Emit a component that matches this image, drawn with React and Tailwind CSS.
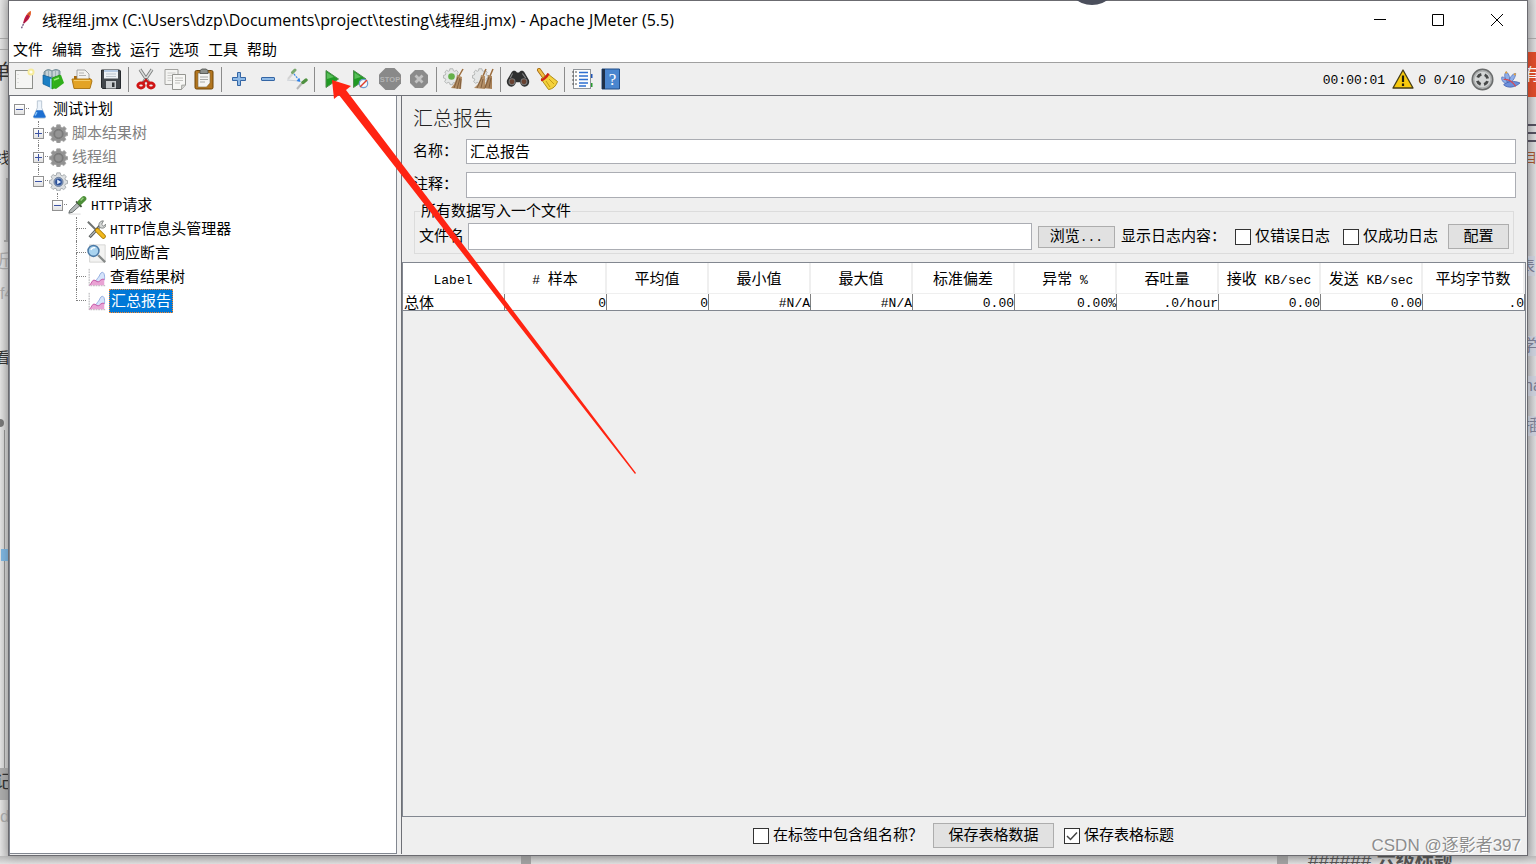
/**
 * App.jsx — JMeter main window (summary report) floating over a desktop.
 *
 * Structure:
 *  - Desktop    → slivers of the windows behind
 *  - TitleBar / MenuBar / Toolbar
 *  - TestPlanTree → left pane
 *  - SummaryReport → right pane
 */

/* ====================================================================
   Text helper — ascii runs use the narrower mono face
   ==================================================================== */
function Mixed({ children }) {
  return children.split(/([\x20-\x7e]+)/).map((part, i) =>
    /^[\x20-\x7e]+$/.test(part) ? (
      <span key={i} className="whitespace-pre font-['Liberation_Mono',monospace] text-[13px] leading-none">{part}</span>
    ) : (
      part
    )
  );
}

/* ====================================================================
   Icons
   ==================================================================== */
function Icon({ size = 'size-[22px]', children }) {
  return (
    <svg viewBox="0 0 22 22" className={`${size} shrink-0`} fill="none" aria-hidden="true">
      {children}
    </svg>
  );
}

function FeatherIcon() {
  return (
    <Icon size="size-[20px]">
      <path d="M5 20 9 11" stroke="#5a3a6a" strokeWidth="1.3" strokeDasharray="2 1" />
      <path d="M7 15C7 10 10 4 15 1c1 4-2 11-8 14z" fill="#c8193c" />
      <path d="M11 5c1-2 3-3.500 4-4 .5 2 0 4-1 6z" fill="#ef7a22" />
      <path d="M8 14 14 3" stroke="#7c1a55" strokeWidth=".7" />
    </Icon>
  );
}

function NewIcon() {
  return (
    <Icon>
      <rect x="2.500" y="2.500" width="17" height="18" fill="#f5f5f3" stroke="#8d8f8a" />
      <path d="M5 6v11" stroke="#c9c9c6" strokeDasharray="1 3" />
      <circle cx="18" cy="4" r="3.500" fill="#f6eb9a" />
      <circle cx="18" cy="4" r="1.600" fill="#fffef0" />
    </Icon>
  );
}

function TemplatesIcon() {
  return (
    <Icon>
      <path d="M2 4c3-3 5-3 8-1 3-2 5-2 8 0v6H2z" fill="#9fb1b8" stroke="#65818d" strokeWidth=".8" />
      <path d="M5 3v6M8 3v6M12 3v6M15 3v6" stroke="#edf3f5" />
      <path d="m1 7 9 3v10l-9-4z" fill="#1b7fc4" stroke="#0d5a94" strokeWidth=".7" />
      <path d="m8 11 3-1v10l-3 1z" fill="#9bd8f2" />
      <path d="m10 10 8-3v10l-8 4z" fill="#35bb1c" stroke="#178209" strokeWidth=".7" />
      <path d="m13 9 6-2 3 8-8 6-3-1z" fill="#2fae1a" />
      <path d="m12 12 5-2" stroke="#9bf07c" strokeWidth="1.500" />
    </Icon>
  );
}

function OpenIcon() {
  return (
    <Icon>
      <path d="M3 20V8h5l2 2h9v10z" fill="#a9690b" />
      <path d="M6 12V2h8l4 4v8z" fill="#f2f2f0" stroke="#929292" strokeWidth=".8" />
      <path d="M8 5h5M8 7.500h7" stroke="#b2b2b2" />
      <path d="M1 11h19l1 2-2 7.500H3z" fill="#e3a325" stroke="#a76f0c" strokeWidth=".9" />
      <path d="M3 12.500h16" stroke="#f6cd6b" />
    </Icon>
  );
}

function SaveIcon() {
  return (
    <Icon>
      <path d="M1.500 2h18l1 1v17.500h-18l-1-1z" fill="#43484d" stroke="#24282c" />
      <rect x="4" y="2" width="14" height="8.500" fill="#eef2f6" />
      <path d="M4 3h14" stroke="#7ea3cf" />
      <path d="M6 6h10M6 8.500h10" stroke="#bcc5cd" />
      <rect x="6" y="13" width="10" height="7.500" fill="#c9cdd0" />
      <rect x="12" y="14.500" width="2.500" height="4.500" fill="#33373a" />
    </Icon>
  );
}

function CutIcon() {
  return (
    <Icon>
      <path d="M5 1.500 14 15M17 1.500 8 15" stroke="#7b7e7d" strokeWidth="3.200" />
      <path d="M5 1.500 14 15M17 1.500 8 15" stroke="#dadcdb" strokeWidth="1.500" />
      <circle cx="11" cy="11" r="1" fill="#555" />
      <ellipse cx="6" cy="17.500" rx="3.200" ry="2.500" stroke="#cf1414" strokeWidth="2.800" />
      <ellipse cx="16" cy="17.500" rx="3.200" ry="2.500" stroke="#cf1414" strokeWidth="2.800" />
      <path d="m8 15 3-3 3 3" stroke="#cf1414" strokeWidth="2" />
    </Icon>
  );
}

function CopyIcon() {
  return (
    <Icon>
      <path d="M1 1.500h13v15H1z" fill="#f4f4f2" stroke="#a3a3a0" />
      <path d="M3.500 5h8M3.500 7.500h5M3.500 10h4M3.500 12.500h4" stroke="#cacac8" />
      <path d="M8.500 6.500h13V17l-4 4.500h-9z" fill="#f7f7f5" stroke="#949591" />
      <path d="M11 10h8M11 12.500h8M11 15h5" stroke="#c2c2bf" />
      <path d="m17.500 21.500.2-4.300 3.800-.2" fill="#d5d5d2" stroke="#949591" strokeWidth=".8" />
    </Icon>
  );
}

function PasteIcon() {
  return (
    <Icon>
      <rect x="2" y="2.500" width="18" height="18.500" rx="1.500" fill="#b2751e" stroke="#704607" />
      <path d="M5 5h12v10l-3.500 4H5z" fill="#f5f5f3" stroke="#7d6b4a" strokeWidth=".6" />
      <path d="M7 9h8M7 11.500h8M7 14h5" stroke="#a9aaa7" />
      <path d="M7 5.500v-3l2-1.500h4l2 1.500v3z" fill="#8d908c" stroke="#4b4e4a" strokeWidth=".8" />
    </Icon>
  );
}

function PlusIcon() {
  return (
    <Icon>
      <path d="M9.500 4.500h3v5h5v3h-5v5h-3v-5h-5v-3h5z" fill="#8db9e6" stroke="#3465a4" strokeLinejoin="round" />
    </Icon>
  );
}

function MinusIcon() {
  return (
    <Icon>
      <rect x="4.500" y="9.500" width="13" height="3" rx=".5" fill="#8db9e6" stroke="#3465a4" />
    </Icon>
  );
}

function ToggleIcon() {
  return (
    <Icon>
      <path d="m2 11 6-7" stroke="#d3d3d3" strokeWidth="2" />
      <path d="m6.500 4.500 2.500-2.500" stroke="#79a86d" strokeWidth="3" strokeLinecap="round" />
      <path d="m1 12 12 1" stroke="#c9cfd6" />
      <path d="m8 6 5 6" stroke="#3c8be8" strokeWidth="1.200" strokeDasharray="2 1" />
      <path d="m14.500 14-1-4-3 3z" fill="#2d7fe6" />
      <path d="m11 21 6-7" stroke="#b9b9b9" strokeWidth="2" />
      <path d="m17 14.500 3-2.500" stroke="#4f9140" strokeWidth="3.400" strokeLinecap="round" />
    </Icon>
  );
}

function PlayIcon() {
  return (
    <Icon>
      <path d="M5 2.500 17.500 11 5 19.500z" fill="#1f9a23" stroke="#4f8d4e" />
      <path d="M6 4.500 13 9 6 11z" fill="#58bd58" />
    </Icon>
  );
}

function PlayNoPauseIcon() {
  return (
    <Icon>
      <path d="M3.500 2.500 16 11 3.500 19.500z" fill="#1f9a23" stroke="#4f8d4e" />
      <path d="M4.500 4.500 11 9 4.500 11z" fill="#58bd58" />
      <circle cx="13.500" cy="15.500" r="4.200" fill="#f5f8fc" stroke="#6f9dd0" strokeWidth="1.200" />
      <path d="m10 19 7-7" stroke="#e03c2b" strokeWidth="1.500" />
    </Icon>
  );
}

function StopIcon() {
  return (
    <Icon>
      <path d="M6.500 0h9L22 6.500v9L15.500 22h-9L0 15.500v-9z" fill="#898989" />
      <text x="11" y="14" textAnchor="middle" fontSize="7.500" fontWeight="700" fill="#b3b3b3" className="font-['Liberation_Sans',sans-serif]">
        STOP
      </text>
    </Icon>
  );
}

function ShutdownIcon() {
  return (
    <Icon>
      <path d="M7 2h8l5 5v8l-5 5H7l-5-5V7z" fill="#8b8b8b" />
      <path d="m7.500 7.500 7 7m0-7-7 7" stroke="#c2c2c2" strokeWidth="2.800" />
    </Icon>
  );
}

const gearPath =
  'M9 1h4l.6 2.600 1.800.8L17.700 3 20 5.600l-1.500 2.200.7 1.700 2.300.5v3.400l-2.500.6-.7 1.700 1.300 2.200-2.500 2.400-2.200-1.300-1.700.6L12.600 22H9.300l-.6-2.400-1.800-.7-2.300 1.300-2.400-2.400 1.400-2.300-.7-1.700L.6 13.200V9.800l2.400-.6.700-1.700L2.400 5.300 4.800 3l2.100 1.300 1.700-.7z';

function GearIcon({ disabled }) {
  return (
    <Icon size="size-[19px]">
      <path d={gearPath} fill={disabled ? '#929292' : '#dcdfe1'} stroke={disabled ? '#a4a4a4' : '#9da2a6'} />
      <circle cx="11" cy="11.500" r="5.300" fill={disabled ? '#808080' : '#7d94bb'} stroke={disabled ? '#747474' : '#6c7d99'} />
      <circle cx="11" cy="11.500" r="3.800" fill={disabled ? '#949494' : '#2a5099'} />
      {!disabled && <path d="m9.500 8.800 4.500 2.700-4.500 2.700z" fill="#e5efff" />}
    </Icon>
  );
}

function ClearIcon() {
  return (
    <Icon>
      <g transform="scale(.76)">
        <path d={gearPath} fill="#e5e7e7" stroke="#a5a8a7" />
      </g>
      <circle cx="8.500" cy="8.500" r="3.300" fill="#65b14b" />
      <path d="m20 1-4 7" stroke="#9b6c3c" strokeWidth="1.500" />
      <path d="m14 7 5 2-1 12-10-1c3-3 5-7 6-13z" fill="#b08a60" />
      <path d="m15 9-4 11m6-10-3 11m4-10-1 10" stroke="#755333" strokeWidth=".8" />
    </Icon>
  );
}

function ClearAllIcon() {
  return (
    <Icon>
      <g transform="scale(.76)">
        <path d={gearPath} fill="#e5e7e7" stroke="#a5a8a7" />
      </g>
      <path d="m14 1-3 7M21 1l-3 7" stroke="#9b6c3c" strokeWidth="1.500" />
      <path d="m9 7 4 1v13l-11-1c4-3 6-7 7-13z" fill="#b59068" />
      <path d="m16 7 4 1v13l-10-1c4-3 5-7 6-13z" fill="#a98259" />
      <path d="M10 9 5 20m6-9-2 9m8-11-4 11m6-10-2 10" stroke="#755333" strokeWidth=".8" />
    </Icon>
  );
}

function BinocularsIcon() {
  return (
    <Icon size="size-[24px]">
      <path d="M5 5c1-2 4-2 5 0h2c1-2 4-2 5 0l4 7c1 3-1 6-4 6-2 0-4-2-4-4H9c0 2-2 4-4 4-3 0-5-3-4-6z" fill="#2f3030" />
      <circle cx="5.500" cy="13.500" r="2.700" fill="#694130" stroke="#777" />
      <circle cx="16.500" cy="13.500" r="2.700" fill="#694130" stroke="#777" />
      <path d="m6 6-2 4M15 6l3 4" stroke="#858787" />
    </Icon>
  );
}

function BroomIcon() {
  return (
    <Icon>
      <path d="m3 2 5 7" stroke="#a66a10" strokeWidth="4" strokeLinecap="round" />
      <path d="m3 2 5 7" stroke="#f2bf45" strokeWidth="2.400" strokeLinecap="round" />
      <path d="m12 6 9.500 7.500C20 18 17 21 12.500 21.500L5 11z" fill="#f4d13c" stroke="#a8860f" strokeWidth=".9" />
      <path d="m13 11 5 5m-8-3 4 6" stroke="#c49c15" />
      <path d="M5 12c2 0 6-3 7.500-6.500" stroke="#cf2318" strokeWidth="2.400" />
    </Icon>
  );
}

function FunctionIcon() {
  return (
    <Icon>
      <path d="M19 6h2.500v4H19z" fill="#1f55b8" />
      <path d="M19 15h2.500v4H19z" fill="#279b2e" />
      <rect x="2.500" y="1.500" width="17" height="19" fill="#fdfdfd" stroke="#8f9499" />
      <path d="M1 4h5M1 8h5M1 12h5M1 16h5" stroke="#555" strokeDasharray="2 1" />
      <path d="M8 4.500h9M8 8h9M8 11.500h9M8 15h9M8 18h7" stroke="#2e6fd0" strokeWidth="1.300" />
    </Icon>
  );
}

function HelpIcon() {
  return (
    <Icon>
      <path d="M2 1h17.500v20H2z" fill="#4a86cf" stroke="#234f88" />
      <path d="M2 1h3v20H2z" fill="#1f3149" />
      <text x="12.500" y="16.500" textAnchor="middle" fontSize="17" fill="#fff" className="font-['Liberation_Serif',serif]">?</text>
    </Icon>
  );
}

function WarningIcon() {
  return (
    <Icon>
      <path d="M11 2 21 20H1z" fill="#f7c90d" stroke="#463d16" strokeWidth="1.300" strokeLinejoin="round" />
      <path d="M11 7.500v6.500M11 15.500V18" stroke="#221e0a" strokeWidth="2.200" />
    </Icon>
  );
}

function ThreadsIcon() {
  return (
    <Icon size="size-[23px]">
      <circle cx="11" cy="11" r="9.800" fill="#b0b2b2" stroke="#6a6c6c" strokeWidth="1.500" />
      <circle cx="11" cy="11" r="7.500" fill="#d4d6d6" />
      <circle cx="11" cy="11" r="5" stroke="#474949" strokeWidth="2.800" strokeDasharray="4.500 3.354" strokeDashoffset="-1.600" />
    </Icon>
  );
}

function QuickIcon() {
  return (
    <Icon size="size-[19px]">
      <path d="M7 16C2 15 0 11 1 8c3 0 6 3 7 7zM8 15C4 10 3 5 6 2c4 3 5 8 3 13zM9 15c0-5 4-11 8-11 0 4-3 9-7 11z" fill="#8eaee8" stroke="#4c68b6" strokeWidth=".8" />
      <path d="M3 17c5-4 12-5 19-2-5 5-14 7-19 2z" fill="#6b8fdb" stroke="#3d57a5" strokeWidth=".8" />
      <path d="M3 11c6-1 10 2 14 8" stroke="#d64a55" strokeWidth="1.300" />
      <circle cx="6" cy="3" r="1.300" fill="#e6a23b" />
      <circle cx="16" cy="5" r="1.300" fill="#e6a23b" />
    </Icon>
  );
}

function FlaskIcon() {
  return (
    <Icon size="size-[19px]">
      <path d="M8.500 1h5v8l4.500 10q.5 2-1.500 2H5.500q-2 0-1.500-2L8.500 9z" fill="#edf4fb" stroke="#b3c2d0" />
      <path d="m7.500 12h7l3.500 7q0 1.500-1.500 1.500H5.500Q4 20.500 4 19z" fill="#1d6fd1" />
      <path d="m8 14-2 4" stroke="#8ac4f7" strokeWidth="1.500" />
    </Icon>
  );
}

function DropperIcon() {
  return (
    <Icon size="size-[20px]">
      <path d="M2 21h13" stroke="#d7d7d7" />
      <path d="m2 20 1-3L12 8l3 3-9 8z" fill="#b3b8b8" stroke="#5e6464" />
      <path d="m10 7 6 6" stroke="#3f5338" strokeWidth="2" />
      <path d="m14.500 8 4-4" stroke="#4d8f38" strokeWidth="5.500" strokeLinecap="round" />
      <path d="m15 6 3-3" stroke="#9ad085" strokeWidth="1.500" />
    </Icon>
  );
}

function ToolsIcon() {
  return (
    <Icon size="size-[19px]">
      <path d="m3 20 12-13" stroke="#5b5f5e" strokeWidth="3.500" />
      <path d="m3.500 19 12-12" stroke="#bfc3c2" strokeWidth="1.200" />
      <path d="M14 8c-1-4 1-7 5-7l-2 4 2 2 3-2c0 4-4 6-8 3z" fill="#d4d7d6" stroke="#686c6b" strokeWidth=".9" />
      <path d="m1 2 11 11" stroke="#6f7372" strokeWidth="2.200" />
      <path d="m12 12 7 7" stroke="#a87900" strokeWidth="5.500" strokeLinecap="round" />
      <path d="m12 12 7 7" stroke="#f2b91d" strokeWidth="3.500" strokeLinecap="round" />
    </Icon>
  );
}

function MagnifierIcon() {
  return (
    <Icon size="size-[19px]">
      <path d="M3 1h18v20H3z" fill="#f3f3f2" stroke="#d0d0ce" />
      <path d="m13 13 8 8" stroke="#858988" strokeWidth="2.600" />
      <circle cx="7.500" cy="8" r="6.300" fill="#a9d3ef" stroke="#4c7aa6" strokeWidth="1.800" />
      <path d="M4.500 7c1-3 4-3 5-2.500" stroke="#fff" strokeWidth="1.500" />
    </Icon>
  );
}

function ChartIcon() {
  return (
    <Icon size="size-[19px]">
      <path d="M2.500 1v19.500H21" stroke="#a3a3a8" strokeDasharray="2 1" />
      <path d="M9 15c2 0 2-2 4-4s2-6 5-6c2 0 3 5 2 9l-7 3z" fill="#d5e4fb" stroke="#8aa5dc" />
      <path d="M3 20c2-2 3-6 5-6s3 2 5 2 3-4 7-3v7z" fill="#e9a3d4" />
      <path d="M3 20c2-2 3-6 5-6s3 2 5 2 3-4 7-3" stroke="#c04b9c" />
    </Icon>
  );
}

/* ====================================================================
   Desktop — what can be seen around the window
   ==================================================================== */
const leftBits = [
  { text: '单', className: 'top-[62px] left-[-9px] text-[20px] text-[#333]' },
  { text: '线', className: 'top-[148px] left-[-5px] text-[15px] text-[#333]' },
  { text: '近', className: 'top-[252px] left-[-7px] text-[18px] text-[#aaa]' },
  { text: 'f4', className: 'top-[284px] left-0 text-[16px] text-[#aaa]' },
  { text: '看', className: 'top-[348px] left-[-5px] text-[15px] text-[#333]' },
  { text: '记', className: 'top-[772px] left-[-5px] text-[18px] text-[#333]' },
  { text: 'd', className: 'top-[807px] left-0 text-[17px] text-[#aaa]' },
];

const rightBits = [
  { text: '目录', className: 'top-[148px] left-[-4px] text-[13px] text-[#a4552f]' },
  { text: '表', className: 'top-[256px] left-[-8px] text-[15px] text-[#7d8196] bg-[#ced2de]' },
  { text: '学分', className: 'top-[336px] left-[-7px] text-[16px] text-[#7d8196] bg-[#ced2de]' },
  { text: 'na', className: 'top-[376px] left-[-4px] text-[16px] text-[#7d8196] bg-[#ced2de]' },
  { text: '插', className: 'top-[416px] left-[-4px] text-[16px] text-[#7d8196] bg-[#ced2de]' },
];

function Desktop() {
  return (
    <div aria-hidden="true" className="absolute inset-0 overflow-hidden bg-[#d6d6d6]">
      <div className="absolute inset-y-0 left-0 w-2 overflow-hidden bg-gradient-to-r from-[#e4e4e4] to-[#c8c8c8]">
        <div className="absolute top-[38px] h-[12px] w-2 border-y border-[#aaa]" />
        <div className="absolute top-[178px] left-1 h-[64px] w-1 border-r-2 border-b-2 border-[#a4a4a4]" />
        <div className="absolute top-[419px] left-[-4px] size-2 rounded-full bg-[#777]" />
        <div className="absolute top-[430px] left-1 h-[340px] w-px bg-[#929292]" />
        <div className="absolute top-[549px] left-px h-[12px] w-2 bg-[#7eb5df]" />
        <div className="absolute top-[768px] h-[32px] w-2 bg-[#acacac]" />
        {leftBits.map((bit) => (
          <span key={bit.text} className={`absolute whitespace-nowrap ${bit.className}`}>{bit.text}</span>
        ))}
      </div>
      <div className="absolute inset-y-0 right-0 w-2 overflow-hidden bg-gradient-to-r from-[#c2c2c4] to-[#dededf]">
        <div className="absolute top-[38px] h-px w-2 bg-[#aaa]" />
        <div className="absolute top-[52px] h-[45px] w-2 overflow-hidden bg-[#df4d2c] text-[16px] text-white">
          <span className="absolute top-[13px] left-[-4px]">有</span>
        </div>
        <div className="absolute top-[124px] h-[18px] w-2 border-y-2 border-[#55515f]" />
        <div className="absolute top-[132px] h-[2px] w-2 bg-[#55515f]" />
        {rightBits.map((bit) => (
          <span key={bit.text} className={`absolute whitespace-nowrap ${bit.className}`}>{bit.text}</span>
        ))}
      </div>
      <div className="absolute inset-x-0 bottom-0 h-2 overflow-hidden bg-gradient-to-b from-[#bcbcbc] to-[#e0e0e0]">
        <div className="absolute left-[521px] h-2 w-[10px] bg-[#a2a2a2]" />
        <div className="absolute left-[1277px] h-2 w-[11px] bg-[#a2a2a2]" />
        <span className="absolute top-[-5px] left-[1308px] text-[19px] leading-5 font-bold whitespace-nowrap text-[#555]">
          <span className="font-normal">######</span> 六级标题
        </span>
      </div>
    </div>
  );
}

/* ====================================================================
   Window chrome
   ==================================================================== */
function TitleBar() {
  return (
    <header className="flex h-[38px] shrink-0 items-center bg-white pl-2">
      <FeatherIcon />
      <h1 className="ml-[5px] flex-1 pb-px font-['Open_Sans','Noto_Sans_CJK_SC',sans-serif] text-[16px] whitespace-nowrap">
        <span className="text-[15px]">线程组</span>.jmx (C:\Users\dzp\Documents\project\testing\
        <span className="text-[15px]">线程组</span>.jmx) - Apache JMeter (5.5)
      </h1>
      <button type="button" aria-label="最小化" className="flex h-full w-[58px] items-center justify-center">
        <svg viewBox="0 0 12 12" className="size-3" stroke="#000"><path d="M0 5.500h12" /></svg>
      </button>
      <button type="button" aria-label="最大化" className="flex h-full w-[58px] items-center justify-center">
        <svg viewBox="0 0 12 12" className="size-3" stroke="#000" fill="none"><path d="M.5.5h11v11H.5z" /></svg>
      </button>
      <button type="button" aria-label="关闭" className="flex h-full w-[60px] items-center justify-center">
        <svg viewBox="0 0 12 12" className="size-3" stroke="#000"><path d="m0 0 12 12M12 0 0 12" /></svg>
      </button>
    </header>
  );
}

const menus = ['文件', '编辑', '查找', '运行', '选项', '工具', '帮助'];

function MenuBar() {
  return (
    <nav className="flex h-[24px] shrink-0 items-center gap-[9px] border-b border-[#a0a0a0] bg-white pl-1">
      {menus.map((menu) => (
        <button key={menu} type="button" className="pb-px leading-5">{menu}</button>
      ))}
    </nav>
  );
}

const toolGroups = [
  [['新建', NewIcon], ['模板', TemplatesIcon], ['打开', OpenIcon], ['保存', SaveIcon]],
  [['剪切', CutIcon], ['复制', CopyIcon], ['粘贴', PasteIcon]],
  [['展开', PlusIcon], ['折叠', MinusIcon], ['切换', ToggleIcon]],
  [['启动', PlayIcon], ['不停顿启动', PlayNoPauseIcon], ['停止', StopIcon], ['关闭', ShutdownIcon]],
  [['清除', ClearIcon], ['清除全部', ClearAllIcon]],
  [['查找', BinocularsIcon], ['重置查找', BroomIcon]],
  [['函数助手', FunctionIcon], ['帮助', HelpIcon]],
];

function Toolbar() {
  return (
    <div className="flex h-[33px] shrink-0 items-center border-b border-[#6e7076] bg-[#efefef] pr-[7px]">
      {toolGroups.map((group, i) => (
        <div key={i} className="flex items-center">
          {i > 0 && <div className="flex w-[6px] justify-center"><div className="h-[25px] w-px bg-[#8b8b8b]" /></div>}
          {group.map(([label, Glyph]) => (
            <button key={label} type="button" aria-label={label} className="flex w-[29px] justify-center">
              <Glyph />
            </button>
          ))}
        </div>
      ))}
      <div className="ml-auto flex items-center">
        <span className="mr-[7px]"><Mixed>00:00:01</Mixed></span>
        <button type="button" aria-label="日志"><WarningIcon /></button>
        <span className="ml-1"><Mixed>0 0/10</Mixed></span>
        <span className="ml-[6px]"><ThreadsIcon /></span>
        <span className="ml-[7px]"><QuickIcon /></span>
      </div>
    </div>
  );
}

/* ====================================================================
   Test plan tree — depth is the number of blank indent columns
   ==================================================================== */
const treeRows = [
  { label: '测试计划', icon: <FlaskIcon />, depth: 0, box: '-', root: true },
  { label: '脚本结果树', icon: <GearIcon disabled />, depth: 1, box: '+', disabled: true },
  { label: '线程组', icon: <GearIcon disabled />, depth: 1, box: '+', disabled: true },
  { label: '线程组', icon: <GearIcon />, depth: 1, box: '-', last: true },
  { label: 'HTTP请求', icon: <DropperIcon />, depth: 2, box: '-', last: true },
  { label: 'HTTP信息头管理器', icon: <ToolsIcon />, depth: 3 },
  { label: '响应断言', icon: <MagnifierIcon />, depth: 3 },
  { label: '查看结果树', icon: <ChartIcon />, depth: 3 },
  { label: '汇总报告', icon: <ChartIcon />, depth: 3, last: true, selected: true },
];

function Branch({ up, down, box }) {
  return (
    <span className="relative grid h-6 w-[19px] shrink-0 grid-cols-2 grid-rows-2">
      <span className={up ? 'border-r border-dotted border-[#808080]' : ''} />
      <span className="border-b border-dotted border-[#808080]" />
      <span className={down ? 'border-r border-dotted border-[#808080]' : ''} />
      {box && (
        <span className="absolute inset-0 m-auto flex size-[11px] items-center justify-center border border-[#919191] bg-gradient-to-b from-white to-[#e2e2e2]">
          <span className="h-px w-[7px] bg-[#3c53a5]" />
          {box === '+' && <span className="absolute h-[7px] w-px bg-[#3c53a5]" />}
        </span>
      )}
    </span>
  );
}

function TestPlanTree() {
  return (
    <aside className="w-[387px] shrink-0 border-r border-b border-[#828790] bg-white">
      <ul role="tree" className="pt-px">
        {treeRows.map((row, i) => (
          <li key={i} role="treeitem" aria-selected={Boolean(row.selected)} className="flex h-6 items-center">
            {Array.from({ length: row.depth }, (_, n) => (
              <span key={n} className="w-[19px] shrink-0" />
            ))}
            <Branch up={!row.root} down={!row.root && !row.last} box={row.box} />
            <span className="flex w-[20px] shrink-0 justify-center">{row.icon}</span>
            <span
              className={
                row.selected
                  ? 'ml-[3px] border border-dotted border-[#ff8728] bg-[#0078d7] px-px leading-[22px] text-white'
                  : row.disabled
                    ? 'ml-1 pb-px leading-[23px] text-[#808080]'
                    : 'ml-1 pb-px leading-[23px]'
              }
            >
              <Mixed>{row.label}</Mixed>
            </span>
          </li>
        ))}
      </ul>
    </aside>
  );
}

/* ====================================================================
   Summary report
   ==================================================================== */
function Check({ label, checked }) {
  return (
    <label className="flex items-center gap-1 whitespace-nowrap">
      <span className="relative size-4">
        <input type="checkbox" defaultChecked={checked} className="peer block size-4 appearance-none border border-[#333] bg-white" />
        <svg viewBox="0 0 16 16" className="pointer-events-none absolute inset-0 hidden size-4 peer-checked:block" fill="none">
          <path d="m3 8 3.500 3.500L13 4.500" stroke="#444" strokeWidth="1.500" />
        </svg>
      </span>
      <span className="pb-[2px]">{label}</span>
    </label>
  );
}

function Field({ id, label, value, height }) {
  return (
    <div className="flex items-center">
      <label htmlFor={id} className="w-[53px] shrink-0 pb-[2px]">{label}</label>
      <input id={id} type="text" defaultValue={value} className={`${height} min-w-0 flex-1 border border-[#abadb3] bg-white px-[3px] pb-[3px]`} />
    </div>
  );
}

const columns = [
  ['Label', '总体'],
  ['# 样本', '0'],
  ['平均值', '0'],
  ['最小值', '#N/A'],
  ['最大值', '#N/A'],
  ['标准偏差', '0.00'],
  ['异常 %', '0.00%'],
  ['吞吐量', '.0/hour'],
  ['接收 KB/sec', '0.00'],
  ['发送 KB/sec', '0.00'],
  ['平均字节数', '.0'],
];

const buttonStyle = 'border border-[#adadad] bg-[#e1e1e1] pb-[2px] whitespace-nowrap';

function SummaryReport() {
  return (
    <main className="flex min-w-0 flex-1 flex-col border-l border-[#6e7076] bg-[#efefef]">
      <div className="flex flex-col pr-[10px] pl-[11px]">
        <h2 className="pt-[8px] text-[20px] leading-[30px] font-light text-[#222]">汇总报告</h2>
        <div className="mt-[5px] flex flex-col gap-[8px]">
          <Field id="name" label="名称：" value="汇总报告" height="h-[25px]" />
          <Field id="comment" label="注释：" value="" height="h-[26px]" />
        </div>
        <fieldset className="mt-[2px] mr-[2px] ml-px flex h-[54px] items-start border border-[#dcdcdc] pt-px pr-1 pl-1">
          <legend className="ml-px px-px leading-[22px]">所有数据写入一个文件</legend>
          <div className="flex w-full items-center">
            <label htmlFor="filename" className="w-[49px] shrink-0 pb-[2px]">文件名</label>
            <input id="filename" type="text" className="h-[27px] min-w-0 flex-1 border border-[#abadb3] bg-white px-[3px]" />
            <button type="button" className={`${buttonStyle} ml-[6px] h-[22px] w-[77px] leading-[18px]`}>
              <Mixed>浏览...</Mixed>
            </button>
            <span className="ml-[6px] pb-[2px] whitespace-nowrap">显示日志内容：</span>
            <span className="ml-[9px]"><Check label="仅错误日志" /></span>
            <span className="ml-[13px]"><Check label="仅成功日志" /></span>
            <button type="button" className={`${buttonStyle} ml-[10px] h-[25px] w-[61px] leading-5`}>配置</button>
          </div>
        </fieldset>
      </div>

      <div className="mt-[8px] flex-1 border border-[#828790]">
        <table className="w-full table-fixed border-separate border-spacing-0 border-b border-[#828790] bg-white">
          <thead>
            <tr>
              {columns.map(([head]) => (
                <th key={head} className="h-[31px] border-r-2 border-b border-[#efefef] px-0 pt-[2px] pb-0 font-normal whitespace-nowrap">
                  <Mixed>{head}</Mixed>
                </th>
              ))}
            </tr>
          </thead>
          <tbody>
            <tr>
              {columns.map(([head, value], i) => (
                <td
                  key={head}
                  className={`h-[15px] border-r border-[#808080] p-0 leading-[15px] whitespace-nowrap ${i === 0 ? 'pl-px text-left' : 'text-right'}`}
                >
                  <Mixed>{value}</Mixed>
                </td>
              ))}
            </tr>
          </tbody>
        </table>
      </div>

      <footer className="flex h-[37px] shrink-0 items-center justify-center gap-[10px] pr-px">
        <Check label="在标签中包含组名称？" />
        <button type="button" className={`${buttonStyle} h-[25px] w-[121px] leading-5`}>保存表格数据</button>
        <Check label="保存表格标题" checked />
      </footer>
    </main>
  );
}

/* ====================================================================
   App
   ==================================================================== */
export default function App() {
  return (
    <div className="relative flex h-screen overflow-hidden px-2 pb-2 font-['Liberation_Sans','Noto_Sans_CJK_SC',sans-serif] text-[15px] leading-5 text-black">
      <Desktop />
      <div className="relative flex min-w-0 flex-1 flex-col border border-[#6b6b70] bg-[#efefef] shadow-[0_0_10px_rgba(0,0,0,0.25)]">
        <TitleBar />
        <MenuBar />
        <Toolbar />
        <div className="flex min-h-0 flex-1 gap-1 border-l border-[#828790] pr-px pb-px">
          <TestPlanTree />
          <SummaryReport />
        </div>
      </div>

      {/* top edge bubble, pointer arrow and watermark lie over the window */}
      <div className="absolute top-[-49px] left-[1065px] size-[54px] rounded-full bg-[#4b4f5c]" />
      <svg viewBox="0 0 304 395" className="pointer-events-none absolute top-[80px] left-[332px] h-[395px] w-[304px]" aria-hidden="true">
        <path d="M0 0 19 6l-5 4 290 383-1 1L7 15l-5 4z" fill="#ff2412" />
      </svg>
      <span className="absolute right-[15px] bottom-[6px] text-[17px] leading-6 text-[#8d8d8d] [text-shadow:1px_1px_0_#fff]">
        CSDN @逐影者397
      </span>
    </div>
  );
}
